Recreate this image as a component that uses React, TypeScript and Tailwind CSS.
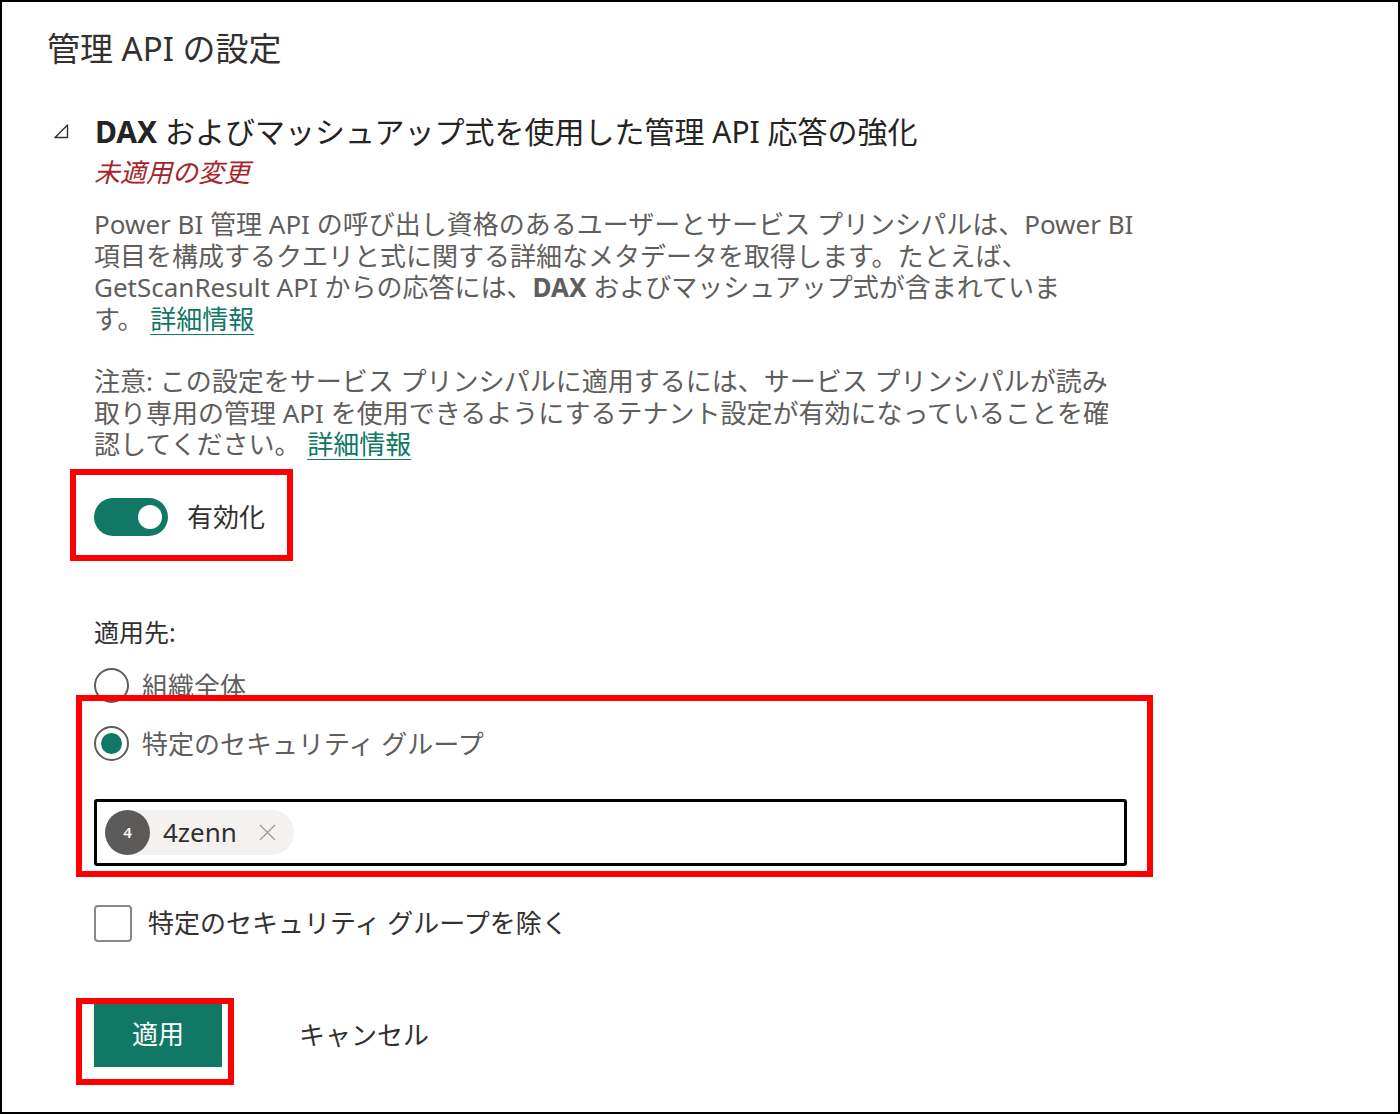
import React from "react";

const font = "font-['Noto_Sans','Noto_Sans_CJK_JP',sans-serif]";

function Link({ children }: { children: React.ReactNode }) {
	return (
		<a href="#" className="inline-block leading-[31.5px] text-[#117865] underline underline-offset-[5px] decoration-1">
			{children}
		</a>
	);
}

function Radio({ checked, label }: { checked?: boolean; label: string }) {
	return (
		<div className="flex items-center h-[36px]">
			<span className="w-[35px] h-[35px] rounded-full border-2 border-[#605e5c] flex items-center justify-center">
				{checked && <span className="w-[21px] h-[21px] rounded-full bg-[#117865]" />}
			</span>
			<span className="ml-[13px] text-[26px] leading-[36px] text-[#605e5c]">{label}</span>
		</div>
	);
}

export default function App() {
	return (
		<div className={`${font} relative w-[1400px] h-[1114px] border-2 border-black bg-white overflow-hidden`}>
			{/* title */}
			<h1 className="mt-[27px] ml-[45px] text-[33px] leading-[40px] text-[#323130] font-normal">
				管理 API の設定
			</h1>

			{/* setting heading */}
			<div className="mt-[43px] flex items-center h-[40px]">
				<svg className="ml-[52px] mb-[2px]" width="15" height="15" viewBox="0 0 15 15">
					<path d="M13.5 1 L13.5 13.5 L1 13.5 Z" fill="none" stroke="#323130" strokeWidth="1.4" strokeLinejoin="round" />
				</svg>
				<h2 className="ml-[26px] text-[30px] leading-[40px] text-[#252423] font-normal whitespace-nowrap">
					<b className="font-bold">DAX</b> およびマッシュアップ式を使用した管理 API 応答の強化
				</h2>
			</div>

			<div className="pl-[92px]">
				<p className="mt-[2px] text-[26px] leading-[36px] italic text-[#a4262c]">未適用の変更</p>

				<p className="mt-[19px] text-[26px] leading-[31.5px] text-[#605e5c] whitespace-nowrap">
					Power BI 管理 API の呼び出し資格のあるユーザーとサービス プリンシパルは、Power BI
					<br />
					項目を構成するクエリと式に関する詳細なメタデータを取得します。たとえば、
					<br />
					GetScanResult API からの応答には、<b className="font-bold">DAX</b> およびマッシュアップ式が含まれていま
					<br />
					す。 <Link>詳細情報</Link>
				</p>

				<p className="mt-[31px] text-[26px] leading-[31.5px] text-[#605e5c] whitespace-nowrap">
					注意: この設定をサービス プリンシパルに適用するには、サービス プリンシパルが読み
					<br />
					取り専用の管理 API を使用できるようにするテナント設定が有効になっていることを確
					<br />
					認してください。 <Link>詳細情報</Link>
				</p>

				{/* toggle */}
				<div className="mt-[37px] flex items-center h-[38px]">
					<span className="w-[74px] h-[38px] rounded-full bg-[#117865] flex items-center justify-end pr-[6px]">
						<span className="w-[24px] h-[24px] rounded-full bg-white" />
					</span>
					<span className="ml-[19px] text-[26px] leading-[36px] text-[#323130]">有効化</span>
				</div>

				<p className="mt-[78px] text-[25px] leading-[36px] text-[#323130]">適用先:</p>

				<div className="mt-[18px]">
					<Radio label="組織全体" />
				</div>
				<div className="mt-[22px]">
					<Radio checked label="特定のセキュリティ グループ" />
				</div>

				{/* people picker */}
				<div className="mt-[37px] w-[1033px] h-[67px] border-[3px] border-black rounded-[3px] pl-[8px] pt-[8px]">
					<div className="inline-flex items-center h-[45px] rounded-full bg-[#f3f2f1] pr-[18px]">
						<span className="w-[45px] h-[45px] rounded-full bg-[#5c5b5a] text-white text-[15px] font-semibold flex items-center justify-center">
							4
						</span>
						<span className="ml-[13px] text-[26px] leading-[36px] text-[#323130]">4zenn</span>
						<svg className="ml-[22px]" width="17" height="17" viewBox="0 0 17 17">
							<path d="M1 1 L16 16 M16 1 L1 16" stroke="#a19f9d" strokeWidth="1.4" />
						</svg>
					</div>
				</div>

				{/* checkbox */}
				<div className="mt-[39px] flex items-center h-[37px]">
					<span className="w-[38px] h-[37px] rounded-[4px] border-2 border-[#8a8886]" />
					<span className="ml-[16px] text-[26px] leading-[36px] text-[#323130]">特定のセキュリティ グループを除く</span>
				</div>

				{/* actions */}
				<div className="mt-[61px] flex items-center">
					<button className="w-[128px] h-[64px] bg-[#117865] text-white text-[26px]">適用</button>
					<button className="ml-[77px] text-[26px] leading-[36px] text-[#323130]">キャンセル</button>
				</div>
			</div>

			{/* red annotation boxes */}
			<div className="absolute left-[68px] top-[467px] w-[223px] h-[92px] border-[6px] border-[#ff0000]" />
			<div className="absolute left-[74px] top-[693px] w-[1077px] h-[182px] border-[6px] border-[#ff0000]" />
			<div className="absolute left-[74px] top-[996px] w-[158px] h-[87px] border-[6px] border-[#ff0000]" />
		</div>
	);
}
